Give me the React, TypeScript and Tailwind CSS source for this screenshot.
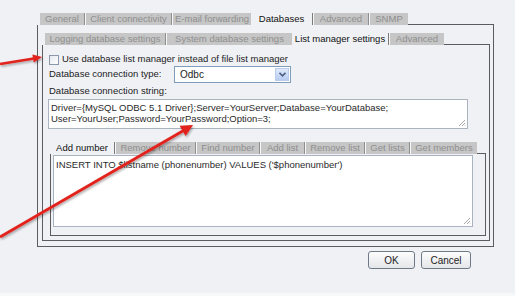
import React from 'react';

type Tab = { label: string; w: number; active?: boolean };

const TabStrip: React.FC<{ tabs: Tab[]; lead?: number; fill: string }> = ({ tabs, lead = 0, fill }) => (
  <div className="flex h-[12px] items-stretch leading-[11px]">
    {lead > 0 && <div style={{ width: lead }} />}
    {tabs.map((t, i) => (
      <React.Fragment key={t.label}>
        {i > 0 && !t.active && !tabs[i - 1].active && (
          <div className="w-[2px] border-l border-[#8e8e8e] bg-[#f7f7f7]" />
        )}
        {i > 0 && tabs[i - 1].active && <div className="w-[2px] border-l border-[#7a7a7a] bg-[#f7f7f7]" />}
        <div
          style={{ width: t.w }}
          className={
            t.active
              ? 'text-center text-[#111] whitespace-nowrap'
              : 'text-center text-[#8f8f8f] bg-[#c6c6c6] whitespace-nowrap'
          }
        >
          {t.label}
        </div>
      </React.Fragment>
    ))}
    <div className={`${fill} border-b border-[#5c5c5c]`} />
  </div>
);

const Grip: React.FC = () => (
  <svg className="absolute right-[1px] bottom-[1px]" width="8" height="8" viewBox="0 0 8 8">
    <path d="M7 1 L1 7 M7 4 L4 7 M7 6.5 L6.5 7" stroke="#a8a8a8" strokeWidth="1" />
  </svg>
);

export default function App() {
  return (
    <div
      className="relative w-[515px] h-[296px] overflow-hidden bg-[#eff1f5] text-[9.5px] text-[#1c1c1c] border-b-[3px] border-[#f7f8fa]"
      style={{ fontFamily: '"Liberation Sans", Arial, sans-serif' }}
    >
      <div className="pt-[13px] pl-[37px] w-[494px]">
        <TabStrip
          lead={3}
          fill="flex-1"
          tabs={[
            { label: 'General', w: 44 },
            { label: 'Client connectivity', w: 85 },
            { label: 'E-mail forwarding', w: 78 },
            { label: 'Databases', w: 61, active: true },
            { label: 'Advanced', w: 54 },
            { label: 'SNMP', w: 38 },
          ]}
        />
        <div className="h-[222px] border-l border-r border-b border-[#5c5c5c] pl-[4px] pr-[3px] pt-[8px]">
          <TabStrip
            lead={3}
            fill="flex-1"
            tabs={[
              { label: 'Logging database settings', w: 120 },
              { label: 'System database settings', w: 125 },
              { label: 'List manager settings', w: 96, active: true },
              { label: 'Advanced', w: 54 },
            ]}
          />
          <div className="h-[196px] border-l border-r border-b border-[#5c5c5c] pl-[5px] pr-[3px] pt-[8px]">
            <label className="flex items-center h-[11px] mt-[1px] pl-[1px] gap-[3px]">
              <span className="w-[10px] h-[10px] border border-[#8b98aa] bg-gradient-to-br from-[#e4e8ee] to-white" />
              <span>Use database list manager instead of file list manager</span>
            </label>
            <div className="flex items-center mt-[1px] h-[17px] pl-[1px]">
              <span className="w-[125px]">Database connection type:</span>
              <div className="relative flex items-center w-[117px] h-[17px] border border-[#7f9db9] bg-white pl-[5px] text-[10px]">
                <span>Odbc</span>
                <div className="absolute right-[1px] top-[1px] w-[14px] h-[13px] bg-gradient-to-b from-[#dfe9fb] to-[#b8cdf1] border border-[#b9cbe9] flex items-center justify-center">
                  <svg width="7" height="5" viewBox="0 0 7 5">
                    <path d="M0.5 0.8 L3.5 3.8 L6.5 0.8" fill="none" stroke="#4d6185" strokeWidth="1.6" />
                  </svg>
                </div>
              </div>
            </div>
            <div className="pl-[1px] mt-[2px] leading-[11px]">Database connection string:</div>
            <div className="relative mt-[3px] w-[420px] h-[30px] border border-[#a9b4c0] bg-white pl-[2px] pt-[2px] leading-[11px] text-[#2a2a2a]">
              <div>Driver={'{'}MySQL ODBC 5.1 Driver{'}'};Server=YourServer;Database=YourDatabase;</div>
              <div>User=YourUser;Password=YourPassword;Option=3;</div>
              <Grip />
            </div>
            <div className="ml-[2px] mt-[13px]">
              <TabStrip
                fill="flex-1"
                tabs={[
                  { label: 'Add number', w: 64, active: true },
                  { label: 'Remove number', w: 79 },
                  { label: 'Find number', w: 62 },
                  { label: 'Add list', w: 43 },
                  { label: 'Remove list', w: 58 },
                  { label: 'Get lists', w: 43 },
                  { label: 'Get members', w: 66 },
                ]}
              />
              <div className="h-[82px] border-l border-r border-b border-[#5c5c5c] pl-[2px] pt-[1px]">
                <div className="relative w-[420px] h-[72px] border border-[#a9b4c0] bg-white pl-[2px] pt-[3px] leading-[11px] text-[#2a2a2a]">
                  INSERT INTO $listname (phonenumber) VALUES ('$phonenumber')
                  <Grip />
                </div>
              </div>
            </div>
          </div>
        </div>
        <div className="flex justify-end gap-[6px] pr-[23px] mt-[4px]">
          <button className="w-[47px] h-[18px] rounded-[3px] border border-[#6f7a87] bg-gradient-to-b from-[#fdfdfd] to-[#e4e6e9] text-[10px] text-[#222]">
            OK
          </button>
          <button className="w-[50px] h-[18px] rounded-[3px] border border-[#6f7a87] bg-gradient-to-b from-[#fdfdfd] to-[#e4e6e9] text-[10px] text-[#222]">
            Cancel
          </button>
        </div>
      </div>

      <svg className="absolute inset-0 pointer-events-none" width="515" height="296" viewBox="0 0 515 296">
        <defs>
          <filter id="sh" x="-20%" y="-20%" width="140%" height="140%">
            <feDropShadow dx="1" dy="1.5" stdDeviation="1" floodColor="#000" floodOpacity="0.35" />
          </filter>
        </defs>
        <g filter="url(#sh)" fill="#e2221b" stroke="#e2221b">
          <line x1="0" y1="64" x2="34" y2="58.5" strokeWidth="2.5" />
          <polygon points="42,57 33.8,62.4 32.4,54.6" stroke="none" />
          <line x1="0" y1="237" x2="184" y2="130.2" strokeWidth="2.8" />
          <polygon points="193,125 185.6,136 179.6,125.8" stroke="none" />
        </g>
      </svg>
    </div>
  );
}
